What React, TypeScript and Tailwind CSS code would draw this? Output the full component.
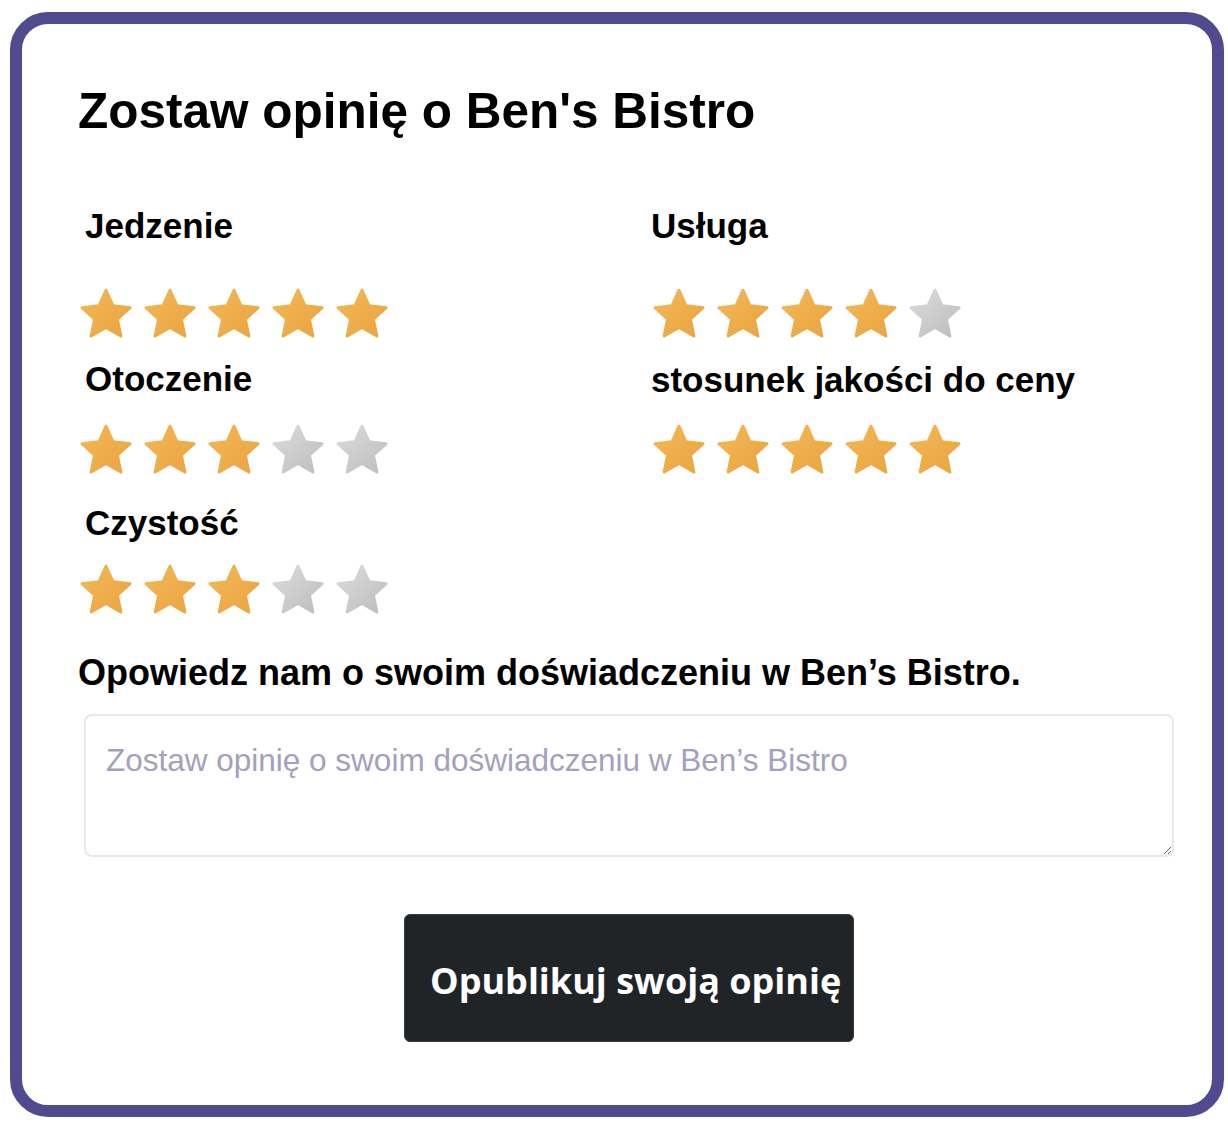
import { useId } from "react";

type Rating = { label: string; value: number };

const left: Rating[] = [
  { label: "Jedzenie", value: 5 },
  { label: "Otoczenie", value: 3 },
  { label: "Czystość", value: 3 },
];

const right: Rating[] = [
  { label: "Usługa", value: 4 },
  { label: "stosunek jakości do ceny", value: 5 },
];

function starPath(cx: number, cy: number, R: number, r: number) {
  const pts: string[] = [];
  for (let i = 0; i < 10; i++) {
    const rad = i % 2 === 0 ? R : r;
    const a = -Math.PI / 2 + (i * Math.PI) / 5;
    pts.push(`${(cx + rad * Math.cos(a)).toFixed(2)},${(cy + rad * Math.sin(a)).toFixed(2)}`);
  }
  return `M${pts.join("L")}Z`;
}

const STAR = starPath(28, 27.5, 25.3, 12);

function Star({ on }: { on: boolean }) {
  const id = useId().replace(/:/g, "");
  return (
    <svg width="56" height="52" viewBox="0 0 56 52" className="shrink-0">
      <defs>
        <linearGradient id={`g${id}`} x1="0" y1="0" x2="1" y2="1">
          {on ? (
            <>
              <stop offset="0" stopColor="#f3b856" />
              <stop offset="1" stopColor="#e9a43f" />
            </>
          ) : (
            <>
              <stop offset="0" stopColor="#dcdcdc" />
              <stop offset="1" stopColor="#bdbdbd" />
            </>
          )}
        </linearGradient>
      </defs>
      <path
        d={STAR}
        fill={`url(#g${id})`}
        stroke={`url(#g${id})`}
        strokeWidth="3"
        strokeLinejoin="round"
      />
    </svg>
  );
}

function Stars({ value }: { value: number }) {
  return (
    <div className="flex gap-[8px]">
      {[1, 2, 3, 4, 5].map((n) => (
        <Star key={n} on={n <= value} />
      ))}
    </div>
  );
}

function Label({ children, className = "" }: { children: string; className?: string }) {
  return (
    <div className={`text-[35px] leading-none font-bold text-black whitespace-nowrap ${className}`}>
      {children}
    </div>
  );
}

export default function App() {
  return (
    <div className="bg-white min-h-[1124px] pt-[12px] pl-[10px] font-['Liberation_Sans',Arial,sans-serif]">
      <div className="w-[1214px] h-[1105px] border-[12px] border-[#524a8e] rounded-[38px] bg-white pt-[62px] pl-[56px] pr-[38px]">
        <h1 className="text-[49.5px] leading-none font-bold text-black">
          Zostaw opinię o Ben's Bistro
        </h1>

        <div className="mt-[72px] grid grid-cols-[573px_1fr]">
          <div>
            <Label className="ml-[7px]">{left[0].label}</Label>
            <div className="mt-[45px]">
              <Stars value={left[0].value} />
            </div>
          </div>
          <div>
            <Label>{right[0].label}</Label>
            <div className="mt-[45px]">
              <Stars value={right[0].value} />
            </div>
          </div>

          <div className="mt-[21px]">
            <Label className="ml-[7px]">{left[1].label}</Label>
            <div className="mt-[28px]">
              <Stars value={left[1].value} />
            </div>
          </div>
          <div className="mt-[22px]">
            <Label>{right[1].label}</Label>
            <div className="mt-[27px]">
              <Stars value={right[1].value} />
            </div>
          </div>

          <div className="mt-[29px]">
            <Label className="ml-[7px]">{left[2].label}</Label>
            <div className="mt-[24px]">
              <Stars value={left[2].value} />
            </div>
          </div>
        </div>

        <p className="mt-[39px] text-[36px] leading-none font-bold text-black whitespace-nowrap">
          Opowiedz nam o swoim doświadczeniu w Ben’s Bistro.
        </p>

        <textarea
          placeholder="Zostaw opinię o swoim doświadczeniu w Ben’s Bistro"
          className="mt-[23px] ml-[6px] block w-[1090px] h-[143px] border-2 border-[#e8e8e8] rounded-[8px] pt-[26px] px-[20px] text-[31.5px] leading-[1.2] text-black placeholder:text-[#a4a0bd] outline-none font-['Liberation_Sans',Arial,sans-serif]"
        />

        <div className="mt-[57px] pl-[326px]">
          <button className="w-[450px] h-[128px] bg-[#212427] rounded-[6px] border border-[#3a3d40] flex items-center pl-[25px] pt-[7px] text-white text-[36px] font-bold font-['Open_Sans',sans-serif]">
            Opublikuj swoją opinię
          </button>
        </div>
      </div>
    </div>
  );
}
